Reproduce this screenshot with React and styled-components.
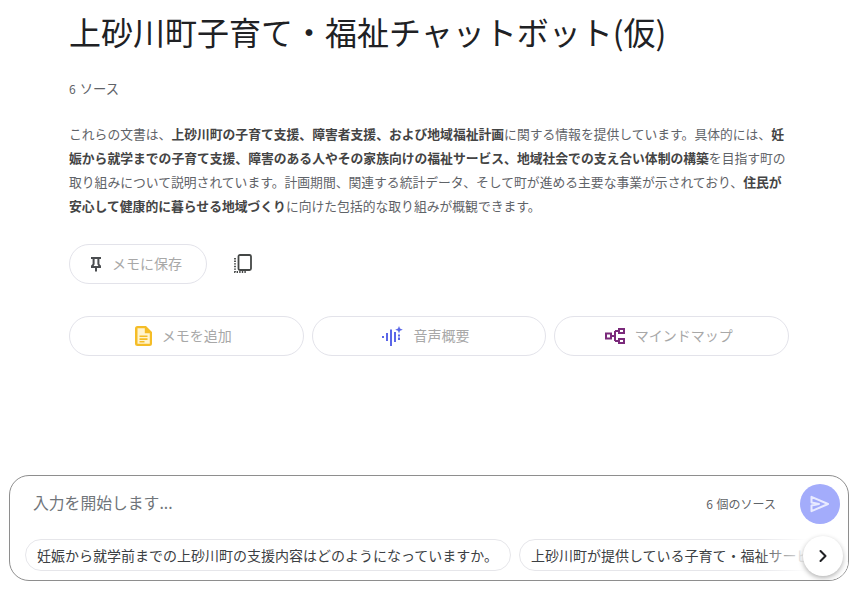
import React from "react";
import styled, { createGlobalStyle } from "styled-components";
import { ChevronRight } from "lucide-react";

const GlobalStyle = createGlobalStyle`
  html, body {
    margin: 0;
    height: 100%;
    background: #fff;
    overflow: hidden;
  }
  body {
    font-family: "Noto Sans CJK JP", "Noto Sans", sans-serif;
    color: #3c4043;
  }
`;

const Page = styled.div`
  display: flex;
  flex-direction: column;
  height: 590px;
  width: 863px;
  box-sizing: border-box;
  padding: 0 14px 9px 9px;
`;

const Content = styled.main`
  flex: 1;
  padding: 8px 60px 0;
  min-height: 0;
`;

const Title = styled.h1`
  margin: 0;
  font-size: 32px;
  font-weight: 400;
  line-height: 46px;
  color: #202124;
  white-space: nowrap;
`;

const SourceCount = styled.div`
  margin-top: 25px;
  font-size: 13.33px;
  line-height: 20px;
  color: #5f6368;
`;

const Digit = styled.span`
  font-size: 12px;
  margin-right: 1px;
`;

const Summary = styled.p`
  margin: 23px 0 0;
  font-size: 12.8px;
  line-height: 24px;
  color: #5f6368;

  b {
    font-weight: 700;
    color: #444;
  }
`;

const SaveRow = styled.div`
  display: flex;
  align-items: center;
  gap: 26px;
  margin-top: 26px;
`;

const Pill = styled.button`
  display: flex;
  align-items: center;
  justify-content: center;
  box-sizing: border-box;
  height: 40px;
  padding: 0;
  border: 1px solid #e3e3ea;
  border-radius: 20px;
  background: #fff;
  font-family: inherit;
  font-size: 14px;
  color: #a8a8a8;
`;

const PillLabel = styled.span`
  margin-top: -2px;
`;

const SavePill = styled(Pill)`
  justify-content: flex-start;
  width: 138px;
  padding-left: 18px;
  gap: 8px;
`;

const ActionRow = styled.div`
  display: grid;
  grid-template-columns: repeat(3, 1fr);
  gap: 8px;
  margin-top: 32px;
`;

const ActionPill = styled(Pill)`
  gap: 10px;
  padding-right: 6px;
`;

const CopyButton = styled.span`
  display: flex;
  width: 20px;
  height: 20px;
`;

const Composer = styled.section`
  position: relative;
  box-sizing: border-box;
  height: 106px;
  border: 1px solid #8e8e8e;
  border-radius: 20px;
  background: #fff;
  overflow: hidden;
`;

const InputRow = styled.div`
  display: flex;
  align-items: center;
  height: 56px;
  padding: 0 8px 0 23px;
  box-sizing: border-box;
`;

const Placeholder = styled.div`
  flex: 1;
  margin-top: -3px;
  font-size: 15.8px;
  color: #70757a;
`;

const ComposerCount = styled.div`
  margin: -1px 24px 0 0;
  font-size: 12px;
  color: #5f6368;
`;

const SendButton = styled.span`
  display: flex;
  align-items: center;
  justify-content: center;
  width: 40px;
  height: 40px;
  border-radius: 50%;
  background: #a3acfb;
`;

const Chips = styled.div`
  display: flex;
  gap: 8px;
  margin-top: 7px;
  padding-left: 15px;
  overflow: hidden;
`;

const Chip = styled.div`
  flex: none;
  box-sizing: border-box;
  height: 32px;
  padding: 0 12px 0 11px;
  display: flex;
  align-items: center;
  border: 1px solid #e6e6ea;
  border-radius: 16px;
  font-size: 14px;
  color: #3c4043;
  white-space: nowrap;
`;

const ChipFade = styled.div`
  position: absolute;
  right: 0;
  bottom: 0;
  width: 90px;
  height: 50px;
  background: linear-gradient(to right, rgba(255, 255, 255, 0), #fff 55%);
`;

const NextButton = styled.span`
  position: absolute;
  right: 5px;
  bottom: 4px;
  display: flex;
  align-items: center;
  justify-content: center;
  width: 40px;
  height: 40px;
  border-radius: 50%;
  background: #fff;
  color: #202124;
  box-shadow: 0 2px 5px rgba(0, 0, 0, 0.3);
`;

const PinIcon = () => (
  <svg width="16" height="16" viewBox="0 0 16 16" fill="#4a4d50">
    <path d="M3 1h10v2h-1.600v5l1.600 1.800V12H9v3.500H7V12H3V9.800L4.600 8V3H3z M6.600 3v5.200l-1 1.800h4.800l-1-1.800V3z" fillRule="evenodd" />
  </svg>
);

const CopyIcon = () => (
  <svg width="20" height="20" viewBox="0 0 20 20" fill="none">
    <rect x="5.500" y="1" width="12.500" height="15" rx="1.500" stroke="#444746" strokeWidth="1.800" />
    <path d="M2 4v14h12" stroke="#444746" strokeWidth="1.800" strokeDasharray="1.400 1.200" />
  </svg>
);

const NoteIcon = () => (
  <svg width="17" height="20" viewBox="0 0 17 20">
    <path d="M2.500 0H11l6 6v11.500a2.500 2.500 0 0 1-2.500 2.500h-12A2.500 2.500 0 0 1 0 17.500v-15A2.500 2.500 0 0 1 2.500 0z" fill="#f5bd27" />
    <path d="M2.500 2.200H9.800V7.200h5V17.800H2.500z" fill="#fff4d0" />
    <path d="M4.500 9.500h8v1.600h-8zM4.500 12.300h8v1.600h-8zM4.500 15.100h5v1.500h-5z" fill="#f5bd27" />
  </svg>
);

const AudioIcon = () => (
  <svg width="21" height="20" viewBox="0 0 21 20" fill="#5b67e8">
    <rect x="0" y="10" width="2" height="2" />
    <rect x="4" y="7" width="2" height="8" />
    <rect x="8" y="3.500" width="2" height="16.500" />
    <rect x="12" y="6" width="2" height="10" />
    <rect x="16" y="8.500" width="2" height="2" />
    <rect x="16" y="11.500" width="2" height="2.500" />
    <path d="M17 0l1 2.600L20.800 3.700 18 4.800 17 7.500 16 4.800 13.200 3.700 16 2.600z" />
  </svg>
);

const MindMapIcon = () => (
  <svg width="20" height="16" viewBox="0 0 20 16" fill="none" stroke="#7b2a7b" strokeWidth="2">
    <rect x="1" y="5.500" width="5" height="5" />
    <rect x="14" y="1" width="5" height="4" />
    <rect x="14" y="11" width="5" height="4" />
    <path d="M6 8h4M10 3v10M10 3h4M10 13h4" />
  </svg>
);

const SendIcon = () => (
  <svg width="20" height="18" viewBox="0 0 20 18" fill="none">
    <path d="M1.500 1.800L18 9 1.500 16.200V10.500L9 9 1.500 7.500z" stroke="#e9ebff" strokeWidth="2" strokeLinejoin="round" />
  </svg>
);

const App = () => (
  <Page>
    <GlobalStyle />
    <Content>
      <Title>上砂川町子育て・福祉チャットボット(仮)</Title>
      <SourceCount><Digit>6</Digit> ソース</SourceCount>
      <Summary>
        これらの文書は、<b>上砂川町の子育て支援、障害者支援、および地域福祉計画</b>に関する情報を提供しています。具体的には、<b>妊娠から就学までの子育て支援、障害のある人やその家族向けの福祉サービス、地域社会での支え合い体制の構築</b>を目指す町の取り組みについて説明されています。計画期間、関連する統計データ、そして町が進める主要な事業が示されており、<b>住民が安心して健康的に暮らせる地域づくり</b>に向けた包括的な取り組みが概観できます。
      </Summary>
      <SaveRow>
        <SavePill><PinIcon /><PillLabel>メモに保存</PillLabel></SavePill>
        <CopyButton><CopyIcon /></CopyButton>
      </SaveRow>
      <ActionRow>
        <ActionPill><NoteIcon /><PillLabel>メモを追加</PillLabel></ActionPill>
        <ActionPill><AudioIcon /><PillLabel>音声概要</PillLabel></ActionPill>
        <ActionPill><MindMapIcon /><PillLabel>マインドマップ</PillLabel></ActionPill>
      </ActionRow>
    </Content>
    <Composer>
      <InputRow>
        <Placeholder>入力を開始します...</Placeholder>
        <ComposerCount><Digit>6</Digit> 個のソース</ComposerCount>
        <SendButton><SendIcon /></SendButton>
      </InputRow>
      <Chips>
        <Chip>妊娠から就学前までの上砂川町の支援内容はどのようになっていますか。</Chip>
        <Chip>上砂川町が提供している子育て・福祉サービスにはどのようなものがありますか。</Chip>
      </Chips>
      <ChipFade />
      <NextButton><ChevronRight size={20} strokeWidth={2.5} /></NextButton>
    </Composer>
  </Page>
);

export default App;
